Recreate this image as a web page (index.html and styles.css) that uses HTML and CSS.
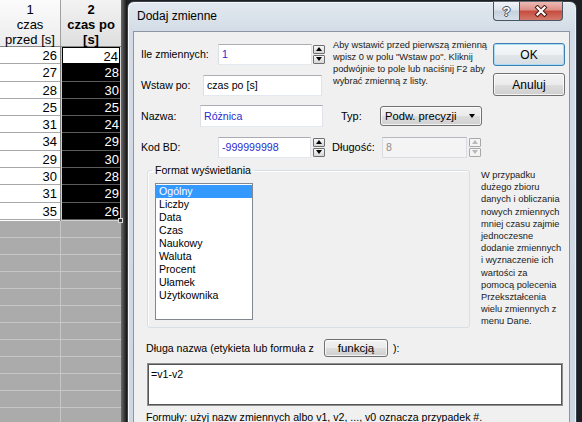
FILE: index.html
```html
<!DOCTYPE html>
<html lang="pl">
<head>
<meta charset="utf-8">
<title>Dodaj zmienne</title>
<link rel="stylesheet" href="styles.css">
</head>
<body>
<div class="screen">
  <div class="sheet">
    <div class="hrow">
      <div class="hcell c1">1<br>czas<br>przed [s]</div>
      <div class="hcell c2">2<br>czas po<br>[s]</div>
    </div>
    <div class="grid">
      <div class="col1">
        <div class="cell">26</div><div class="cell">27</div><div class="cell">28</div><div class="cell">25</div><div class="cell">31</div>
        <div class="cell">34</div><div class="cell">29</div><div class="cell">30</div><div class="cell">31</div><div class="cell">35</div>
      </div>
      <div class="col2">
        <div class="cell active">24</div><div class="cell">28</div><div class="cell">30</div><div class="cell">25</div><div class="cell">24</div>
        <div class="cell">29</div><div class="cell">30</div><div class="cell">28</div><div class="cell">29</div><div class="cell">26</div>
        <span class="handle"></span>
      </div>
    </div>
    <div class="empty"></div>
  </div>
  <div class="shadow"></div>
  <div class="dialog">
    <div class="titlebar">
      <div class="title">Dodaj zmienne</div>
      <div class="caps">
        <div class="capbtn helpbtn">?</div>
        <div class="capbtn closebtn">
          <svg width="14" height="12" viewBox="0 0 14 12"><path d="M3.5 2.5 L10.5 9.5 M10.5 2.5 L3.5 9.5" stroke="#4b1d19" stroke-width="4.2" stroke-linecap="square" fill="none"/><path d="M3.5 2.5 L10.5 9.5 M10.5 2.5 L3.5 9.5" stroke="#ffffff" stroke-width="2.2" stroke-linecap="square" fill="none"/></svg>
        </div>
      </div>
    </div>
    <div class="client">
      <div class="top">
        <div class="lc">
          <div class="r12">
            <div class="f12">
              <div class="row">
                <div class="lbl w77">Ile zmiennych:</div>
                <div class="tb blue w94">1</div>
                <div class="spin"><span class="up"></span><span class="dn"></span></div>
              </div>
              <div class="row">
                <div class="lbl w62">Wstaw po:</div>
                <div class="tb w119">czas po [s]</div>
              </div>
            </div>
            <div class="help">Aby wstawić przed pierwszą zmienną<br>wpisz 0 w polu "Wstaw po". Kliknij<br>podwójnie to pole lub naciśnij F2 aby<br>wybrać zmienną z listy.</div>
          </div>
          <div class="row r3">
            <div class="lbl w59">Nazwa:</div>
            <div class="tb blue w123 h22">Różnica</div>
            <div class="lbl typ">Typ:</div>
            <div class="sel">Podw. precyzji<span class="arrow"></span></div>
          </div>
          <div class="row r4">
            <div class="lbl w77">Kod BD:</div>
            <div class="tb blue w93">-999999998</div>
            <div class="spin sp2"><span class="up"></span><span class="dn"></span></div>
            <div class="lbl dlug">Długość:</div>
            <div class="tb dis w85">8</div>
            <div class="spin sp2 off"><span class="up"></span><span class="dn"></span></div>
          </div>
        </div>
        <div class="buttons">
          <div class="btn def">OK</div>
          <div class="btn">Anuluj</div>
        </div>
      </div>
      <div class="mid">
        <fieldset class="group">
          <legend>Format wyświetlania</legend>
          <div class="list">
            <div class="it on">Ogólny</div>
            <div class="it">Liczby</div>
            <div class="it">Data</div>
            <div class="it">Czas</div>
            <div class="it">Naukowy</div>
            <div class="it">Waluta</div>
            <div class="it">Procent</div>
            <div class="it">Ułamek</div>
            <div class="it">Użytkownika</div>
          </div>
        </fieldset>
        <div class="side">W przypadku<br>dużego zbioru<br>danych i obliczania<br>nowych zmiennych<br>mniej czasu zajmie<br>jednoczesne<br>dodanie zmiennych<br>i wyznaczenie ich<br>wartości za<br>pomocą polecenia<br>Przekształcenia<br>wielu zmiennych z<br>menu Dane.</div>
      </div>
      <div class="dl">
        <div class="lbl w178">Długa nazwa (etykieta lub formuła z</div>
        <div class="btn small">funkcją</div>
        <div class="lbl close">):</div>
      </div>
      <div class="ta">=v1-v2</div>
      <div class="note">Formuły: użyj nazw zmiennych albo v1, v2, ..., v0 oznacza przypadek #.</div>
    </div>
  </div>
</div>
</body>
</html>
```

FILE: styles.css
```css
* { box-sizing: border-box; }
html, body { margin: 0; padding: 0; }
body {
  width: 582px;
  height: 422px;
  overflow: hidden;
  background: #1d1f22;
  font-family: "Liberation Sans", Arial, sans-serif;
}
.screen {
  display: flex;
  align-items: flex-start;
  height: 422px;
  overflow: hidden;
  background: #1d1f22;
}

/* spreadsheet */
.sheet {
  width: 121px;
  height: 422px;
  flex: none;
  display: flex;
  flex-direction: column;
  background: #ababab;
}
.hrow {
  display: flex;
  height: 47px;
  flex: none;
  border-bottom: 1px solid #8a8a8a;
}
.hcell {
  font-size: 13px;
  line-height: 15px;
  text-align: center;
  padding-top: 2px;
  color: #000;
}
.hcell.c1 {
  width: 61px;
  border-right: 1px solid #a0a0a0;
  background: linear-gradient(#fbfbfb, #ececec);
}
.hcell.c2 {
  width: 60px;
  font-weight: bold;
  background: linear-gradient(#f3f3f3, #dedede);
}
.grid { display: flex; flex: none; }
.col1 {
  width: 61px;
  background: #fff;
  border-right: 1px solid #808080;
}
.cell {
  height: 17.3px;
  font-size: 13px;
  line-height: 17px;
  text-align: right;
  padding-right: 3px;
  border-bottom: 1px solid #a8a8a8;
  color: #000;
}
.col2 {
  width: 60px;
  background: #000;
  position: relative;
  border-left: 1px solid #d0d0d0;
  border-right: 1px solid #d0d0d0;
  border-bottom: 1px solid #d0d0d0;
}
.col2 .cell {
  color: #fff;
  padding-right: 1px;
  border-bottom-color: #5c5c5c;
}
.col2 .cell.active {
  background: #fff;
  color: #000;
  border: 1px solid #000;
}
.handle {
  position: absolute;
  right: -3px;
  bottom: -3px;
  width: 5px;
  height: 5px;
  background: #3a3a3a;
  border: 1px solid #d8d8d8;
}
.empty {
  flex: 1;
  background:
    linear-gradient(to right, transparent 60px, #c6c6c6 60px, #c6c6c6 61px, transparent 61px),
    repeating-linear-gradient(to bottom, #ababab 0, #ababab 16px, #c6c6c6 16px, #c6c6c6 17px);
}
.shadow {
  width: 6px;
  height: 422px;
  flex: none;
  background: linear-gradient(to right, #6a6a6a, #141414);
}

/* dialog window */
.dialog {
  width: 450px;
  height: 440px;
  flex: none;
  margin-top: 1px;
  border: 1px solid #36404b;
  border-radius: 7px 7px 0 0;
  background: linear-gradient(#e2e8ef, #d3dce6 30px, #cdd7e2);
  box-shadow: inset 1px 1px 0 #f4f6f9, inset -1px 0 0 #eef2f6;
  padding: 0 6px 0 5px;
  display: flex;
  flex-direction: column;
}
.titlebar {
  height: 29px;
  flex: none;
  display: flex;
  align-items: flex-start;
}
.title {
  font-size: 12px;
  line-height: 14px;
  margin-top: 7px;
  margin-left: 4px;
  color: #000;
}
.caps {
  margin-left: auto;
  margin-right: 7px;
  margin-top: -1px;
  display: flex;
}
.capbtn {
  height: 20px;
  display: flex;
  align-items: center;
  justify-content: center;
  border: 1px solid #4a5563;
  border-top-color: #606b78;
}
.helpbtn {
  width: 27px;
  border-radius: 0 0 0 4px;
  background: linear-gradient(#f1f4f8, #dbe3ec 45%, #c5d1dd 50%, #d6e0ea);
  color: #fff;
  font-weight: bold;
  font-size: 13px;
  text-shadow: -1px 0 #3f4a57, 1px 0 #3f4a57, 0 -1px #3f4a57, 0 1px #3f4a57;
}
.closebtn {
  width: 43px;
  border-left: none;
  border-radius: 0 0 4px 0;
  background: linear-gradient(#ecbab3, #dc8f86 45%, #c64a3d 50%, #d47a6c);
}

.client {
  flex: 1;
  background: #f0f0f0;
  border: 1px solid #8b96a3;
  border-bottom: none;
  padding: 7px 4px 0 7px;
  font-size: 10.6px;
  color: #000;
}
.top { display: flex; }
.lc { width: 341px; flex: none; }
.r12 { display: flex; }
.f12 {
  width: 185px;
  flex: none;
  padding-top: 4px;
  display: flex;
  flex-direction: column;
  gap: 9px;
}
.row {
  display: flex;
  align-items: center;
  height: 22px;
}
.r3, .r4 { margin-top: 9px; }
.lbl { flex: none; white-space: nowrap; }
.w77 { width: 77px; }
.w62 { width: 62px; }
.w59 { width: 59px; }
.w178 { width: 178px; }
.typ { margin-left: 18px; width: 39px; font-size: 11px; }
.dlug { margin-left: 7px; width: 50px; font-size: 11px; }

.tb {
  height: 21px;
  flex: none;
  background: #fff;
  border: 1px solid;
  border-color: #abadb3 #e2e3ea #e3e9ef #dbdfe6;
  padding: 0 3px;
  display: flex;
  align-items: center;
  color: #000;
  white-space: nowrap;
}
.tb.h22 { height: 22px; }
.w94 { width: 94px; }
.w119 { width: 119px; }
.w123 { width: 123px; }
.w93 { width: 93px; }
.w85 { width: 85px; }
.blue { color: #2b2bcf; }
.tb.dis {
  background: #f4f4f4;
  border-color: #b5b8bc #d9dce0 #d9dce0 #d9dce0;
  color: #8e8e8e;
}

.spin {
  width: 12px;
  height: 19px;
  flex: none;
  margin-left: 1px;
  display: flex;
  flex-direction: column;
  gap: 1px;
}
.spin.sp2 { margin-left: 2px; }
.spin span {
  flex: 1;
  border: 1px solid #6f6f6f;
  border-radius: 1px;
  background: linear-gradient(#f8f8f8, #d6d6d6);
  display: flex;
  align-items: center;
  justify-content: center;
}
.spin .up::after {
  content: "";
  border-left: 3.5px solid transparent;
  border-right: 3.5px solid transparent;
  border-bottom: 4px solid #000;
}
.spin .dn::after {
  content: "";
  border-left: 3.5px solid transparent;
  border-right: 3.5px solid transparent;
  border-top: 4px solid #000;
}
.spin.off span {
  border-color: #a8a8a8;
  background: #f4f4f4;
}
.spin.off .up::after { border-bottom-color: #b8b8b8; }
.spin.off .dn::after { border-top-color: #b8b8b8; }

.help {
  margin-left: 7px;
  font-size: 9.3px;
  line-height: 12px;
  color: #1a1a1a;
  white-space: nowrap;
}

.buttons {
  margin-left: auto;
  width: 72px;
  padding-top: 4px;
  display: flex;
  flex-direction: column;
  gap: 7px;
}
.btn {
  height: 23px;
  border: 1px solid #707070;
  border-radius: 3px;
  background: linear-gradient(#f2f2f2 0, #ebebeb 50%, #dddddd 51%, #cfcfcf 100%);
  box-shadow: inset 0 0 0 1px rgba(255, 255, 255, 0.75);
  display: flex;
  align-items: center;
  justify-content: center;
  font-size: 12px;
  color: #000;
}
.btn.def {
  border-color: #3c7fb1;
  box-shadow: inset 0 0 0 1px #a9dcf6;
  background: linear-gradient(#f5f8fa 0, #eef2f4 50%, #e1e6e9 51%, #d6dde2 100%);
}
.btn.small {
  width: 64px;
  height: 18px;
  font-size: 11.5px;
}
.sel {
  width: 102px;
  height: 20px;
  flex: none;
  border: 1px solid #707070;
  border-radius: 3px;
  background: linear-gradient(#f2f2f2 0, #ebebeb 50%, #dddddd 51%, #cfcfcf 100%);
  box-shadow: inset 0 0 0 1px rgba(255, 255, 255, 0.75);
  display: flex;
  align-items: center;
  padding: 0 6px 0 4px;
  font-size: 11.2px;
  white-space: nowrap;
}
.arrow {
  margin-left: auto;
  border-left: 3.5px solid transparent;
  border-right: 3.5px solid transparent;
  border-top: 4px solid #000;
}

.mid {
  display: flex;
  margin-top: 6px;
  margin-left: 6px;
  height: 164px;
}
.group {
  margin: 0;
  padding: 0 0 7px 7px;
  width: 323px;
  flex: none;
  min-width: 0;
  border: 1px solid #d5dfe5;
  border-radius: 3px;
  box-shadow: 1px 1px 0 #fff inset;
  align-self: flex-start;
}
.group legend {
  margin-left: -3px;
  padding: 0 3px;
  font-size: 10.6px;
  line-height: 13px;
}
.list {
  width: 98px;
  height: 137px;
  margin-top: 6px;
  background: #fff;
  border: 1px solid #828790;
  padding-top: 1px;
  line-height: 13px;
}
.it {
  height: 13px;
  padding-left: 3px;
  white-space: nowrap;
}
.it.on {
  background: #3399ff;
  color: #fff;
}
.side {
  margin-left: 11px;
  margin-top: 5px;
  font-size: 9.3px;
  line-height: 12.2px;
  color: #1a1a1a;
  white-space: nowrap;
}
.dl {
  display: flex;
  align-items: center;
  height: 18px;
  margin-top: 11px;
  padding-left: 5px;
}
.close { margin-left: 5px; }
.ta {
  margin-top: 6px;
  margin-left: 6px;
  width: 416px;
  height: 43px;
  background: #fff;
  border: 1px solid #8e8e8e;
  box-shadow: inset 0 0 0 1px #555;
  padding: 4px 3px;
  line-height: 13px;
}
.note {
  margin-top: 5px;
  padding-left: 5px;
  line-height: 13px;
  white-space: nowrap;
}
```
